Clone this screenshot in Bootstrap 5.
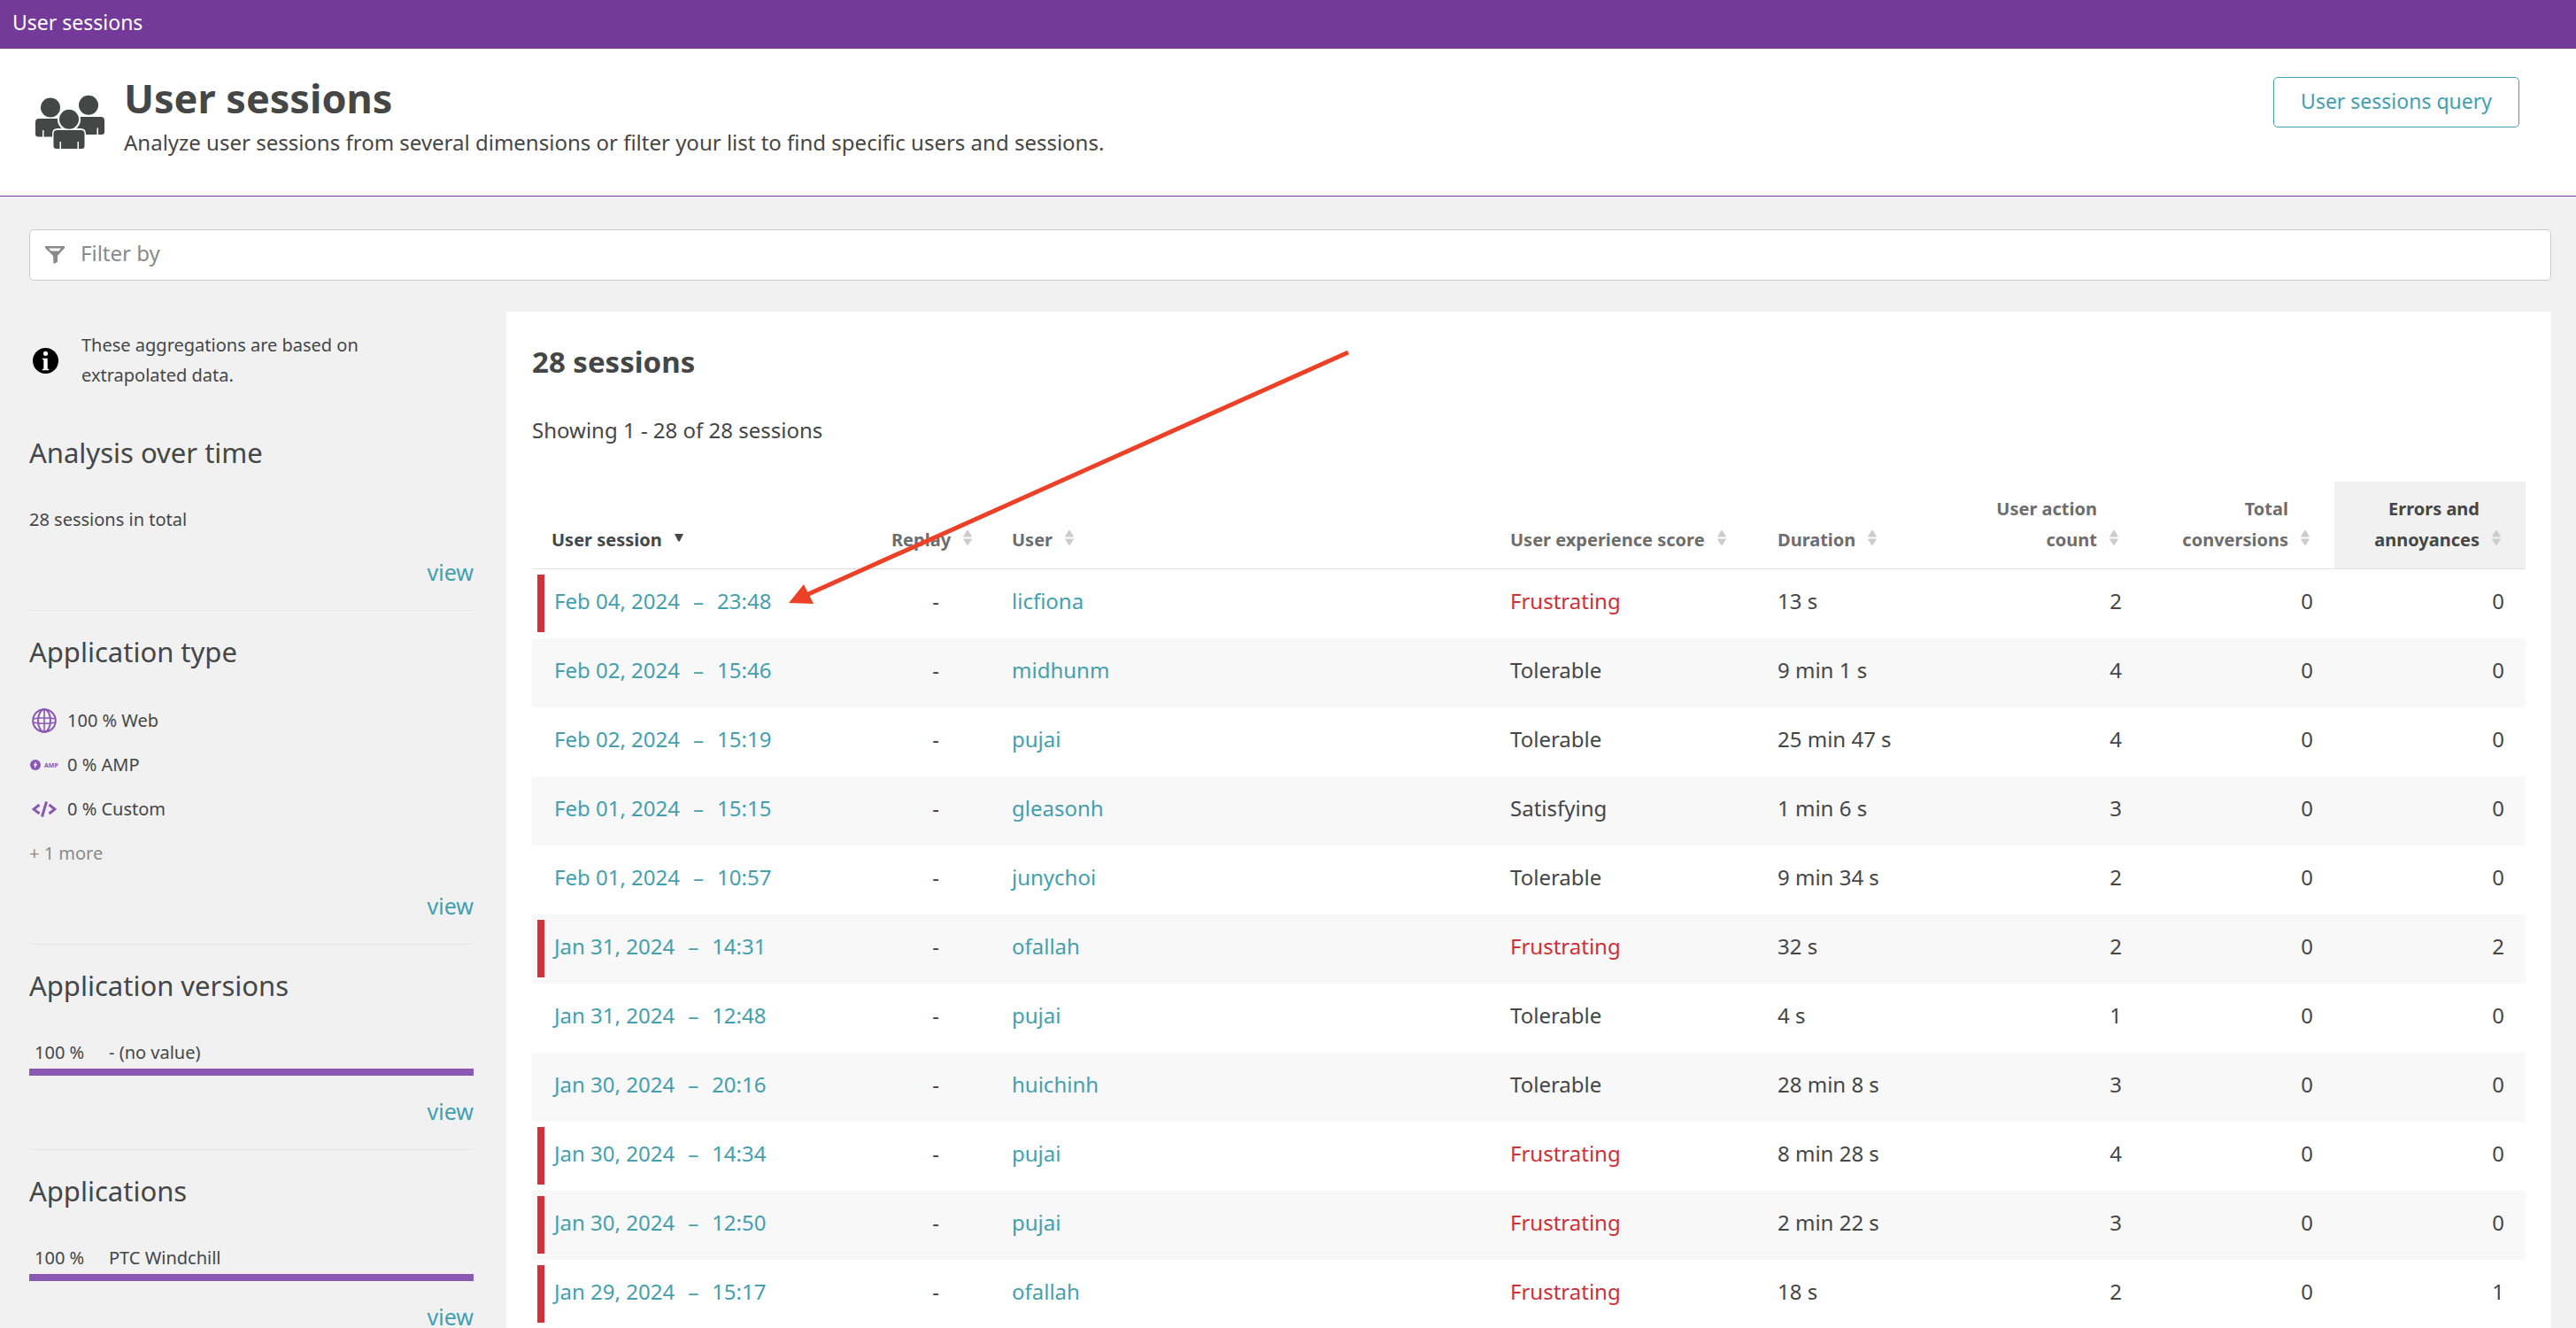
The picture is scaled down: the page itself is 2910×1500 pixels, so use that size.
<!DOCTYPE html>
<html lang="en">
<head>
<meta charset="utf-8">
<meta name="viewport" content="width=device-width, initial-scale=1">
<title>User sessions</title>
<link href="https://cdn.jsdelivr.net/npm/bootstrap@5.3.0/dist/css/bootstrap.min.css" rel="stylesheet">
<style>
:root{--ink:#454646;--muted-ink:#6d6d6d;--teal:#449fae;--purple:#743a99;--violet:#8a57b3;--danger-ink:#cd3037;--rule:#e6e6e6}
body{font-family:"Noto Sans",sans-serif;font-size:24px;line-height:36px;color:var(--ink);background:#f1f1f1}
a{color:var(--teal);text-decoration:none}
a:hover{text-decoration:underline}
.topbar{background:var(--purple);color:#fff;font-size:23px;line-height:50px;padding:0 14px 5px}
.page-head{background:#fff;border-bottom:1px solid var(--purple);padding:26px 64px 42px 38px}
.page-head h1{font-size:45px;line-height:60px;font-weight:700;margin:0 0 2px}
.head-text{margin-left:22px}
.btn-query{--bs-btn-color:var(--teal);--bs-btn-border-color:var(--teal);--bs-btn-hover-bg:var(--teal);--bs-btn-hover-color:#fff;--bs-btn-font-size:23px;--bs-btn-line-height:35px;--bs-btn-border-radius:5px;background:#fff;padding:9px 30px 11px;margin-top:6px}
.content-area{padding:37px 28px 0 33px}
.filter-bar{background:#fff;border:1px solid #ccc;border-radius:5px;padding:0 17px;height:58px;margin-bottom:35px}
.filter-bar input{font-size:24px;line-height:36px;padding:8px 18px 12px;color:var(--ink);box-shadow:none!important}
.filter-bar input::placeholder{color:#8a8a8a}
.side{width:502px;font-size:20px;line-height:34px;padding-top:21px}
.info-note{padding:0 60px 24px 4px;gap:26px}
.side section{padding-top:25px;border-bottom:1px solid var(--rule)}
.side h2{font-size:31px;line-height:42px;font-weight:400;margin:0 0 38px}
.side .view-link{font-size:25px;line-height:24px;margin:30px 0 31px}
.side .usage-bar+.view-link{margin-top:28px}
.type-list{gap:16px;padding-top:2px}
.type-icon{width:34px;margin-right:9px}
.usage-share{width:84px;margin-left:6px}
.usage-bar{--bs-progress-height:8px;--bs-progress-bar-bg:var(--violet);--bs-progress-border-radius:0;margin-top:1px}
.more-note{color:#8a8a8a}
.results{background:#fff;margin-left:37px;padding:34px 29px 0}
.results h2{font-size:33px;line-height:45px;font-weight:700;margin:0 0 37px}
.showing{margin:0 0 40px}
.session-table{table-layout:fixed;--bs-table-color:var(--ink);--bs-table-bg:transparent;margin:0}
.session-table th{font-size:20px;line-height:35px;padding:13px 24px 15px;border-bottom:1px solid #e0e0e0;vertical-align:bottom}
.session-table td{padding:18px 24px 24px;border:0;white-space:nowrap}
.session-table tbody tr:nth-child(even){background:#f8f8f8}
.session-table th:first-child{padding-left:22px}
.session-table td:first-child{padding-left:25px}
.session-table th:nth-child(2){padding-left:12px;padding-right:0}
.session-table th.text-end{padding-right:28px;padding-left:0}
.session-table .hot-col{background:#f1f1f1}
.sort-btn{font-size:20px;line-height:35px;font-weight:700;color:var(--muted-ink);background:none;border:0;padding:0;gap:14px;text-align:inherit;vertical-align:bottom}
.sort-btn svg{margin-bottom:11px}
.sort-btn.strong-label{color:var(--ink)}
.dash-gap{margin:0 15px}
.flagged{background:linear-gradient(#cd3339,#cd3339) 6px 6px/8px 65px no-repeat!important}
.score-bad{color:var(--danger-ink)!important}
.col-session{width:394px}.col-replay{width:124px}.col-score{width:302px}.col-time{width:221px}.col-count{width:216px}
.pointer-arrow{position:absolute;left:319px;top:43px;pointer-events:none}
</style>
</head>
<body class="vh-100 overflow-hidden d-flex flex-column">
<svg class="d-none" aria-hidden="true">
  <symbol id="sort" viewBox="0 0 10 17"><path d="M5 0c.6 0 1 .6 1.300 1.200L9.500 6.300c.5.800.2 1.300-.6 1.300H1.100C.3 7.600 0 7.100.5 6.300L3.700 1.200C4 .6 4.400 0 5 0zM5 17c.6 0 1-.6 1.300-1.200l3.200-5.100c.5-.8.2-1.300-.6-1.300H1.100c-.8 0-1.100.5-.6 1.300l3.200 5.100C4 16.400 4.400 17 5 17z" fill="#ccc"/></symbol>
</svg>

<div class="topbar flex-shrink-0">User sessions</div>

<header class="page-head d-flex align-items-center flex-shrink-0">
  <svg width="80" height="76" viewBox="0 0 80 76" fill="#454646" aria-hidden="true">
    <circle cx="19" cy="29.500" r="11"/><circle cx="62" cy="26.700" r="11"/>
    <path d="M2 46q0-4 4-4h30v20.500H11.500V55h-1.500v7.500H5q-3-.5-3-3z"/>
    <path d="M42 40h34q4 0 4 4v13q0 3-3 3h-4v-7.500h-1.500V60H42z"/>
    <circle cx="40" cy="43" r="13" fill="#fff"/>
    <path d="M21 76V59q0-6 6-6h26q6 0 6 6v17z" fill="#fff"/>
    <circle cx="40" cy="42.800" r="11"/>
    <path d="M22.500 59q0-4 4-4h27q4 0 4 4v14q0 3-3 3H51v-8h-1.500v8h-18.500v-8h-1.500v8h-4q-3 0-3-3z"/>
  </svg>
  <div class="head-text flex-grow-1">
    <h1>User sessions</h1>
    <p class="mb-0">Analyze user sessions from several dimensions or filter your list to find specific users and sessions.</p>
  </div>
  <button type="button" class="btn btn-query align-self-start">User sessions query</button>
</header>

<div class="content-area d-flex flex-column flex-grow-1 overflow-hidden">
  <div class="filter-bar d-flex align-items-center flex-shrink-0">
    <label for="filter" class="d-flex" aria-label="Filter">
      <svg width="22" height="20" viewBox="0 0 22 20" aria-hidden="true"><path fill="#8a8a8a" fill-rule="evenodd" d="M0 0h22v2l-8 9v7l-4.500 2L9 11 0 2zM4 2.500l2.500 3h9L18 2.500z"/></svg>
    </label>
    <input id="filter" type="text" class="form-control border-0 bg-transparent" placeholder="Filter by">
  </div>

  <div class="d-flex flex-grow-1">
    <aside class="side flex-shrink-0">
      <div class="info-note d-flex align-items-center">
        <svg class="flex-shrink-0" width="29" height="29" viewBox="0 0 29 29" aria-hidden="true"><circle cx="14.500" cy="14.500" r="14.500"/><circle cx="14.500" cy="6.300" r="2.600" fill="#fff"/><path d="M10.800 11.700h5.900v12h1.600v1.600h-7.600v-1.600h1.600V13.300h-1.500z" fill="#fff"/></svg>
        <span>These aggregations are based on extrapolated data.</span>
      </div>
      <section class="d-flex flex-column">
        <h2>Analysis over time</h2>
        <div>28 sessions in total</div>
        <a href="#" class="view-link align-self-end">view</a>
      </section>
      <section class="d-flex flex-column">
        <h2>Application type</h2>
        <ul class="type-list list-unstyled d-flex flex-column mb-0">
          <li class="d-flex align-items-center"><span class="type-icon d-flex justify-content-center"><svg width="28" height="28" viewBox="0 0 28 28" fill="none" stroke="#8a57b3" stroke-width="2" aria-hidden="true"><circle cx="14" cy="14" r="12.800"/><ellipse cx="14" cy="14" rx="7" ry="12.800"/><path d="M14 1v26M1.500 12q12.500-2.500 25 0M1.500 16q12.500 2.500 25 0" stroke-width="1.600"/></svg></span>100 % Web</li>
          <li class="d-flex align-items-center"><span class="type-icon d-flex justify-content-center"><svg width="34" height="14" viewBox="0 0 34 14" aria-hidden="true"><circle cx="7" cy="7" r="6" fill="#8a57b3"/><path d="M7.800 3L4.700 7.500h1.700L6 11l3.200-4.700H7.400z" fill="#fff"/><text x="17" y="10" font-size="7" font-weight="700" fill="#8a57b3">AMP</text></svg></span>0 % AMP</li>
          <li class="d-flex align-items-center"><span class="type-icon d-flex justify-content-center"><svg width="28" height="18" viewBox="0 0 28 18" fill="none" stroke="#8a57b3" stroke-width="3" aria-hidden="true"><path d="M8.500 4L2 9l6.500 5M19.500 4L26 9l-6.500 5M16.500 .5l-5 17"/></svg></span>0 % Custom</li>
          <li class="more-note">+ 1 more</li>
        </ul>
        <a href="#" class="view-link align-self-end">view</a>
      </section>
      <section class="d-flex flex-column">
        <h2>Application versions</h2>
        <div class="d-flex"><span class="usage-share">100 %</span><span>- (no value)</span></div>
        <div class="progress usage-bar"><div class="progress-bar" style="width:100%"></div></div>
        <a href="#" class="view-link align-self-end">view</a>
      </section>
      <section class="d-flex flex-column">
        <h2>Applications</h2>
        <div class="d-flex"><span class="usage-share">100 %</span><span>PTC Windchill</span></div>
        <div class="progress usage-bar"><div class="progress-bar" style="width:100%"></div></div>
        <a href="#" class="view-link align-self-end">view</a>
      </section>
    </aside>

    <main class="results flex-grow-1 position-relative">
      <h2>28 sessions</h2>
      <p class="showing">Showing 1 - 28 of 28 sessions</p>
      <table class="table session-table">
        <colgroup><col class="col-session"><col class="col-replay"><col><col class="col-score"><col class="col-time"><col class="col-count"><col class="col-count"><col class="col-count"></colgroup>
        <thead>
          <tr>
            <th><button type="button" class="sort-btn strong-label d-inline-flex align-items-end">User session<svg width="10" height="13" viewBox="0 0 10 13" aria-hidden="true"><path d="M0 0h10L6 8q-1 1.500-2 0z" fill="#454646"/></svg></button></th>
            <th><button type="button" class="sort-btn d-inline-flex align-items-end">Replay<svg width="10" height="17"><use href="#sort"/></svg></button></th>
            <th><button type="button" class="sort-btn d-inline-flex align-items-end">User<svg width="10" height="17"><use href="#sort"/></svg></button></th>
            <th><button type="button" class="sort-btn d-inline-flex align-items-end text-nowrap">User experience score<svg width="10" height="17"><use href="#sort"/></svg></button></th>
            <th><button type="button" class="sort-btn d-inline-flex align-items-end">Duration<svg width="10" height="17"><use href="#sort"/></svg></button></th>
            <th class="text-end"><button type="button" class="sort-btn d-inline-flex align-items-end"><span>User action<br>count</span><svg width="10" height="17"><use href="#sort"/></svg></button></th>
            <th class="text-end"><button type="button" class="sort-btn d-inline-flex align-items-end"><span>Total<br>conversions</span><svg width="10" height="17"><use href="#sort"/></svg></button></th>
            <th class="text-end hot-col"><button type="button" class="sort-btn strong-label d-inline-flex align-items-end"><span>Errors and<br>annoyances</span><svg width="10" height="17"><use href="#sort"/></svg></button></th>
          </tr>
        </thead>
        <tbody>
          <tr><td class="flagged"><a href="#">Feb 04, 2024<span class="dash-gap">–</span>23:48</a></td><td class="text-center">-</td><td><a href="#">licfiona</a></td><td class="score-bad">Frustrating</td><td>13 s</td><td class="text-end">2</td><td class="text-end">0</td><td class="text-end">0</td></tr>
          <tr><td><a href="#">Feb 02, 2024<span class="dash-gap">–</span>15:46</a></td><td class="text-center">-</td><td><a href="#">midhunm</a></td><td>Tolerable</td><td>9 min 1 s</td><td class="text-end">4</td><td class="text-end">0</td><td class="text-end">0</td></tr>
          <tr><td><a href="#">Feb 02, 2024<span class="dash-gap">–</span>15:19</a></td><td class="text-center">-</td><td><a href="#">pujai</a></td><td>Tolerable</td><td>25 min 47 s</td><td class="text-end">4</td><td class="text-end">0</td><td class="text-end">0</td></tr>
          <tr><td><a href="#">Feb 01, 2024<span class="dash-gap">–</span>15:15</a></td><td class="text-center">-</td><td><a href="#">gleasonh</a></td><td>Satisfying</td><td>1 min 6 s</td><td class="text-end">3</td><td class="text-end">0</td><td class="text-end">0</td></tr>
          <tr><td><a href="#">Feb 01, 2024<span class="dash-gap">–</span>10:57</a></td><td class="text-center">-</td><td><a href="#">junychoi</a></td><td>Tolerable</td><td>9 min 34 s</td><td class="text-end">2</td><td class="text-end">0</td><td class="text-end">0</td></tr>
          <tr><td class="flagged"><a href="#">Jan 31, 2024<span class="dash-gap">–</span>14:31</a></td><td class="text-center">-</td><td><a href="#">ofallah</a></td><td class="score-bad">Frustrating</td><td>32 s</td><td class="text-end">2</td><td class="text-end">0</td><td class="text-end">2</td></tr>
          <tr><td><a href="#">Jan 31, 2024<span class="dash-gap">–</span>12:48</a></td><td class="text-center">-</td><td><a href="#">pujai</a></td><td>Tolerable</td><td>4 s</td><td class="text-end">1</td><td class="text-end">0</td><td class="text-end">0</td></tr>
          <tr><td><a href="#">Jan 30, 2024<span class="dash-gap">–</span>20:16</a></td><td class="text-center">-</td><td><a href="#">huichinh</a></td><td>Tolerable</td><td>28 min 8 s</td><td class="text-end">3</td><td class="text-end">0</td><td class="text-end">0</td></tr>
          <tr><td class="flagged"><a href="#">Jan 30, 2024<span class="dash-gap">–</span>14:34</a></td><td class="text-center">-</td><td><a href="#">pujai</a></td><td class="score-bad">Frustrating</td><td>8 min 28 s</td><td class="text-end">4</td><td class="text-end">0</td><td class="text-end">0</td></tr>
          <tr><td class="flagged"><a href="#">Jan 30, 2024<span class="dash-gap">–</span>12:50</a></td><td class="text-center">-</td><td><a href="#">pujai</a></td><td class="score-bad">Frustrating</td><td>2 min 22 s</td><td class="text-end">3</td><td class="text-end">0</td><td class="text-end">0</td></tr>
          <tr><td class="flagged"><a href="#">Jan 29, 2024<span class="dash-gap">–</span>15:17</a></td><td class="text-center">-</td><td><a href="#">ofallah</a></td><td class="score-bad">Frustrating</td><td>18 s</td><td class="text-end">2</td><td class="text-end">0</td><td class="text-end">1</td></tr>
        </tbody>
      </table>
      <svg class="pointer-arrow" width="634" height="290" viewBox="0 0 634 290" aria-hidden="true"><path d="M632 3L20 277" stroke="#ec4127" stroke-width="5"/><path d="M0 286l17-21 11 22z" fill="#ec4127"/></svg>
    </main>
  </div>
</div>
<script src="https://cdn.jsdelivr.net/npm/bootstrap@5.3.0/dist/js/bootstrap.bundle.min.js"></script>
</body>
</html>
